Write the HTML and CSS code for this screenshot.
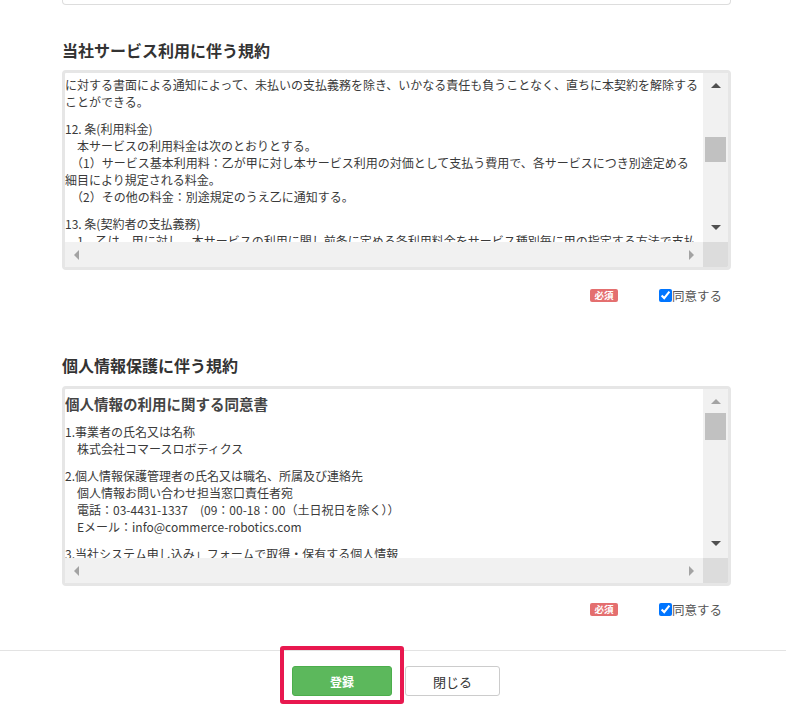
FILE: index.html
```html
<!DOCTYPE html>
<html lang="ja">

<head>
  <meta charset="UTF-8" />
  <meta name="viewport" content="width=device-width, initial-scale=1.0" />
  <title>規約への同意</title>
  <link rel="stylesheet" href="styles.css">
</head>

<body>
  <div class="page">
    <div class="panel-tail"></div>

    <!-- Service terms -->
    <h2 class="section-title">当社サービス利用に伴う規約</h2>
    <div class="terms-box">
      <div class="terms-text">
        <div class="para">
          <div>に対する書面による通知によって、未払いの支払義務を除き、いかなる責任も負うことなく、直ちに本契約を解除する</div>
          <div>ことができる。</div>
        </div>
        <div class="para">
          <div>12. 条(利用料金)</div>
          <div>　本サービスの利用料金は次のとおりとする。</div>
          <div>　（1）サービス基本利用料：乙が甲に対し本サービス利用の対価として支払う費用で、各サービスにつき別途定める</div>
          <div>細目により規定される料金。</div>
          <div>　（2）その他の料金：別途規定のうえ乙に通知する。</div>
        </div>
        <div class="para">
          <div>13. 条(契約者の支払義務)</div>
          <div>　1　乙は、甲に対し、本サービスの利用に関し前条に定める各利用料金をサービス種別毎に甲の指定する方法で支払</div>
        </div>
      </div>
      <div class="vbar">
        <div class="vbtn"><span class="arrow-up"></span></div>
        <div class="vtrack"><div class="thumb" style="margin-top: 40px; height: 25px;"></div></div>
        <div class="vbtn down"><span class="arrow-down"></span></div>
      </div>
      <div class="hbar">
        <span class="arrow-left"></span>
        <span class="arrow-right"></span>
      </div>
      <div class="corner"></div>
    </div>
    <div class="agree-row">
      <span class="badge">必須</span>
      <label class="agree"><input type="checkbox" checked>同意する</label>
    </div>

    <!-- Privacy terms -->
    <h2 class="section-title second">個人情報保護に伴う規約</h2>
    <div class="terms-box">
      <div class="terms-text">
        <div class="doc-title">個人情報の利用に関する同意書</div>
        <div class="para">
          <div>1.事業者の氏名又は名称</div>
          <div>　株式会社コマースロボティクス</div>
        </div>
        <div class="para">
          <div>2.個人情報保護管理者の氏名又は職名、所属及び連絡先</div>
          <div>　個人情報お問い合わせ担当窓口責任者宛</div>
          <div>　電話：03-4431-1337　(09：00-18：00（土日祝日を除く））</div>
          <div>　Eメール：info@commerce-robotics.com</div>
        </div>
        <div class="para">
          <div>3.当社システム申し込み」フォームで取得・保有する個人情報</div>
        </div>
      </div>
      <div class="vbar">
        <div class="vbtn"><span class="arrow-up off"></span></div>
        <div class="vtrack"><div class="thumb" style="margin-top: 0; height: 27px;"></div></div>
        <div class="vbtn down"><span class="arrow-down"></span></div>
      </div>
      <div class="hbar">
        <span class="arrow-left"></span>
        <span class="arrow-right"></span>
      </div>
      <div class="corner"></div>
    </div>
    <div class="agree-row last">
      <span class="badge">必須</span>
      <label class="agree"><input type="checkbox" checked>同意する</label>
    </div>
  </div>

  <!-- Footer actions -->
  <div class="footer">
    <div class="form-actions">
      <span class="highlight"><button class="btn-submit">登録</button></span>
      <button class="btn-close">閉じる</button>
    </div>
  </div>
</body>

</html>
```

FILE: styles.css
```css
body {
  margin: 0;
  font-family: "Noto Sans CJK JP", "Noto Sans", sans-serif;
  color: #333333;
  background-color: #ffffff;
}

.page {
  width: 669px;
  margin-left: 62px;
}

.panel-tail {
  height: 4px;
  width: 667px;
  border: 1px solid #dddddd;
  border-top: none;
  border-radius: 0 0 4px 4px;
}

.section-title {
  margin: 34px 0 9px;
  font-size: 16px;
  line-height: 22px;
  font-weight: 700;
  color: #333333;
}

.section-title.second {
  margin-top: 47px;
  margin-bottom: 10px;
}

.terms-box {
  display: grid;
  grid-template-columns: 1fr 25px;
  grid-template-rows: 1fr 25px;
  height: 200px;
  box-sizing: border-box;
  border: 3px solid #e6e6e6;
  border-radius: 4px;
  overflow: hidden;
}

.terms-text {
  overflow: hidden;
  padding: 3px 0 0 0;
  font-size: 12px;
  line-height: 17px;
  white-space: nowrap;
  color: #3a3a3a;
}

.para {
  margin-top: 10px;
}

.para:first-child {
  margin-top: 0;
}

.doc-title {
  font-size: 14.5px;
  line-height: 24px;
  font-weight: 700;
  color: #444444;
  margin-bottom: 7px;
}

.doc-title + .para {
  margin-top: 0;
}

.vbar {
  display: flex;
  flex-direction: column;
  background-color: #f1f1f1;
}

.vbtn {
  height: 24px;
  display: flex;
  align-items: center;
  justify-content: center;
}

.vbtn.down {
  height: 27px;
  align-items: flex-start;
  padding-top: 10px;
  box-sizing: border-box;
}

.vtrack {
  flex: 1;
  padding: 0 2px;
}

.thumb {
  background-color: #c1c1c1;
}

.hbar {
  display: flex;
  align-items: center;
  justify-content: space-between;
  padding: 0 9px;
  background-color: #f1f1f1;
}

.corner {
  background-color: #dcdcdc;
}

.arrow-up,
.arrow-down {
  width: 0;
  height: 0;
  border-left: 5px solid transparent;
  border-right: 5px solid transparent;
}

.arrow-up {
  border-bottom: 5px solid #505050;
}

.arrow-up.off {
  border-bottom-color: #a3a3a3;
}

.arrow-down {
  border-top: 5px solid #505050;
}

.arrow-left,
.arrow-right {
  width: 0;
  height: 0;
  border-top: 5px solid transparent;
  border-bottom: 5px solid transparent;
}

.arrow-left {
  border-right: 5px solid #a3a3a3;
}

.arrow-right {
  border-left: 5px solid #a3a3a3;
}

.agree-row {
  display: flex;
  justify-content: flex-end;
  align-items: center;
  height: 24px;
  margin-top: 13px;
  padding-right: 9px;
}

.agree-row.last {
  margin-top: 11px;
}

.badge {
  display: inline-block;
  width: 28px;
  height: 13px;
  line-height: 13px;
  text-align: center;
  font-size: 9.5px;
  font-weight: 700;
  color: #ffffff;
  background-color: #e46f6f;
  border-radius: 2px;
  margin-right: 41px;
}

.agree {
  display: flex;
  align-items: center;
  font-size: 12.5px;
  color: #555555;
}

.agree input {
  margin: 0;
  width: 13px;
  height: 13px;
}

.footer {
  margin-top: 29px;
  border-top: 1px solid #e3e3e3;
  padding: 15px 0 16px;
}

.form-actions {
  display: flex;
  justify-content: center;
  gap: 13px;
  padding-left: 6px;
}

.highlight {
  position: relative;
  display: inline-block;
}

.highlight::after {
  content: "";
  position: absolute;
  left: -12px;
  right: -12px;
  top: -20px;
  bottom: -8px;
  border: 4px solid #e8184f;
  border-radius: 3px;
}

.form-actions button {
  height: 30px;
  font-family: inherit;
  border-radius: 3px;
  cursor: pointer;
}

.btn-submit {
  display: block;
  width: 100px;
  background-color: #5cb85c;
  border: 1px solid #4cae4c;
  color: #ffffff;
  font-size: 12px;
  font-weight: 700;
}

.btn-close {
  width: 95px;
  background-color: #ffffff;
  border: 1px solid #cccccc;
  color: #333333;
  font-size: 13px;
}
```
